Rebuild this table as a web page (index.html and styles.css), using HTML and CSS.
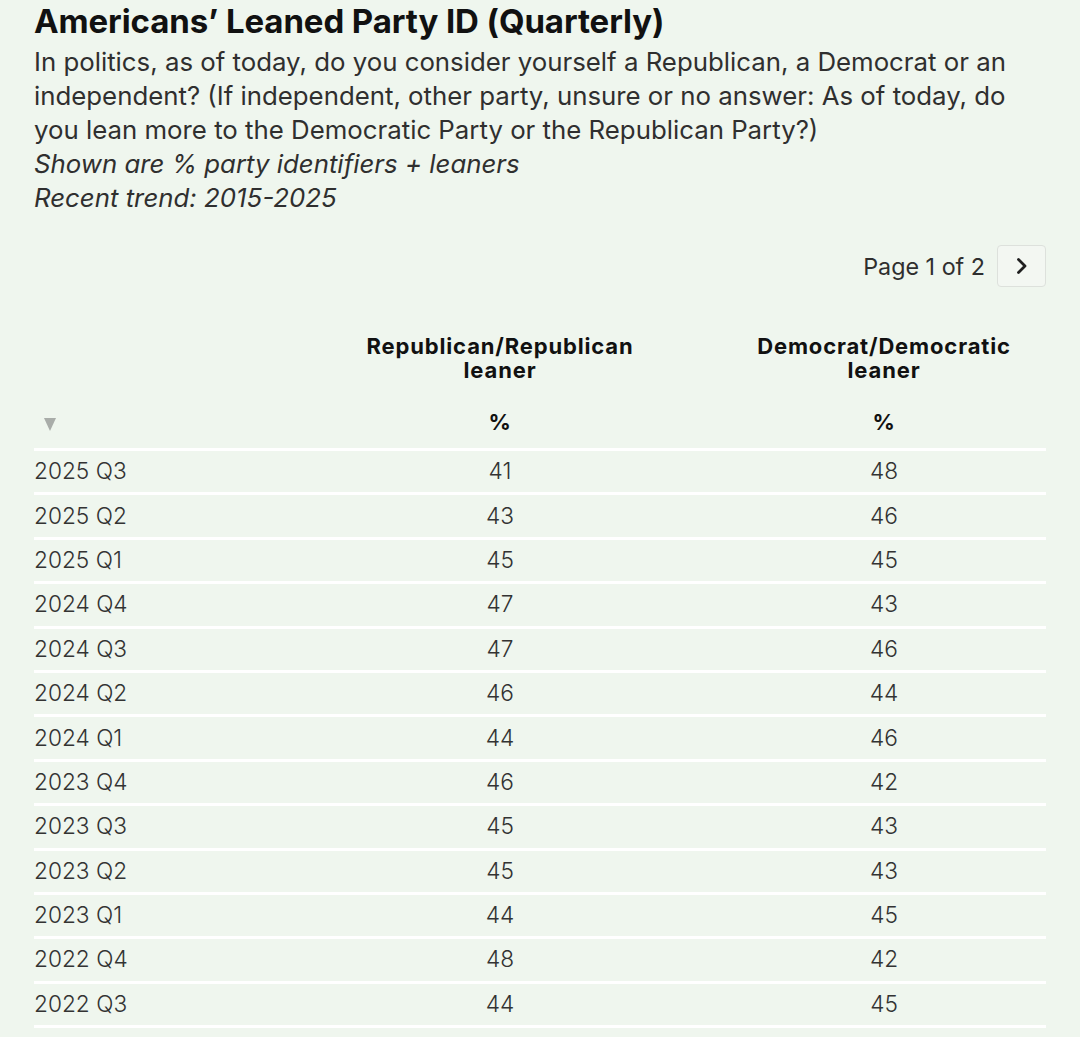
FILE: index.html
```html
<!DOCTYPE html>
<html lang="en">
<head>
<meta charset="utf-8">
<title>Americans' Leaned Party ID (Quarterly)</title>
<link rel="stylesheet" href="styles.css">
</head>
<body>
<main class="wrap">
  <h1 class="title">Americans’ Leaned Party ID (Quarterly)</h1>
  <div class="subtitle">
    <p class="question">In politics, as of today, do you consider yourself a Republican, a Democrat or an independent? (If independent, other party, unsure or no answer: As of today, do you lean more to the Democratic Party or the Republican Party?)</p>
    <p class="note">Shown are % party identifiers + leaners</p>
    <p class="note">Recent trend: 2015-2025</p>
  </div>
  <div class="pager">
    <span class="pager-label">Page 1 of 2</span>
    <button class="pager-btn" type="button" aria-label="Next page">
      <svg width="12" height="16" viewBox="0 0 12 16"><polyline points="2.5,1.5 9,8 2.5,14.5" fill="none" stroke="#1f1f1f" stroke-width="2.8" stroke-linecap="round" stroke-linejoin="round"/></svg>
    </button>
  </div>
  <table class="data">
    <colgroup>
      <col class="c-label">
      <col class="c-rep">
      <col class="c-dem">
    </colgroup>
    <thead>
      <tr class="head-names">
        <th></th>
        <th class="num">Republican/Republican<br>leaner</th>
        <th class="num dem">Democrat/Democratic<br>leaner</th>
      </tr>
      <tr class="head-units">
        <th class="sort"><span class="tri"></span></th>
        <th class="num">%</th>
        <th class="num dem">%</th>
      </tr>
    </thead>
    <tbody>
      <tr><td>2025 Q3</td><td class="num">41</td><td class="num dem">48</td></tr>
      <tr><td>2025 Q2</td><td class="num">43</td><td class="num dem">46</td></tr>
      <tr><td>2025 Q1</td><td class="num">45</td><td class="num dem">45</td></tr>
      <tr><td>2024 Q4</td><td class="num">47</td><td class="num dem">43</td></tr>
      <tr><td>2024 Q3</td><td class="num">47</td><td class="num dem">46</td></tr>
      <tr><td>2024 Q2</td><td class="num">46</td><td class="num dem">44</td></tr>
      <tr><td>2024 Q1</td><td class="num">44</td><td class="num dem">46</td></tr>
      <tr><td>2023 Q4</td><td class="num">46</td><td class="num dem">42</td></tr>
      <tr><td>2023 Q3</td><td class="num">45</td><td class="num dem">43</td></tr>
      <tr><td>2023 Q2</td><td class="num">45</td><td class="num dem">43</td></tr>
      <tr><td>2023 Q1</td><td class="num">44</td><td class="num dem">45</td></tr>
      <tr><td>2022 Q4</td><td class="num">48</td><td class="num dem">42</td></tr>
      <tr><td>2022 Q3</td><td class="num">44</td><td class="num dem">45</td></tr>
    </tbody>
  </table>
</main>
</body>
</html>
```

FILE: styles.css
```css
html, body {
  margin: 0;
  padding: 0;
  background: #eff6ee;
}

body {
  font-family: Inter, "Noto Sans", "Liberation Sans", sans-serif;
  color: #333;
}

.wrap {
  padding: 0 34px;
}

.title {
  margin: 0;
  font-size: 33px;
  line-height: 42px;
  font-weight: 700;
  color: #111;
  letter-spacing: -0.1px;
}

.subtitle {
  margin-top: 3px;
  font-size: 25.8px;
  line-height: 34px;
  color: #2f2f2f;
}

.subtitle p {
  margin: 0;
}

.note {
  font-style: italic;
}

.pager {
  display: flex;
  justify-content: flex-end;
  align-items: center;
  gap: 12px;
  margin-top: 30px;
}

.pager-label {
  font-size: 23.3px;
  color: #2f2f2f;
}

.pager-btn {
  width: 49px;
  height: 42px;
  padding: 0;
  display: flex;
  align-items: center;
  justify-content: center;
  background: #f3f7f2;
  border: 1px solid #dde1dc;
  border-radius: 4px;
}

.data {
  width: 1012px;
  margin-top: 47px;
  border-collapse: collapse;
  table-layout: fixed;
}

.c-label { width: 274px; }
.c-rep { width: 384px; }
.c-dem { width: 354px; }

.data th {
  font-weight: 700;
  font-size: 22px;
  line-height: 24px;
  letter-spacing: 0.85px;
  color: #111;
  padding: 0;
}

.head-names th {
  padding-bottom: 28px;
  vertical-align: top;
}

.head-units th {
  padding-bottom: 14px;
  border-bottom: 3px solid #ffffff;
}

.num {
  text-align: center;
}

.dem {
  padding-left: 30px !important;
}

.sort {
  text-align: left;
}

.tri {
  display: inline-block;
  margin-left: 10px;
  width: 0;
  height: 0;
  border-left: 6.5px solid transparent;
  border-right: 6.5px solid transparent;
  border-top: 13px solid #a9ada9;
  vertical-align: middle;
}

.data td {
  padding: 0 0 2px 0;
  height: 39.4px;
  font-size: 22.7px;
  font-weight: 300;
  color: #333;
  border-bottom: 3px solid #ffffff;
}
```
